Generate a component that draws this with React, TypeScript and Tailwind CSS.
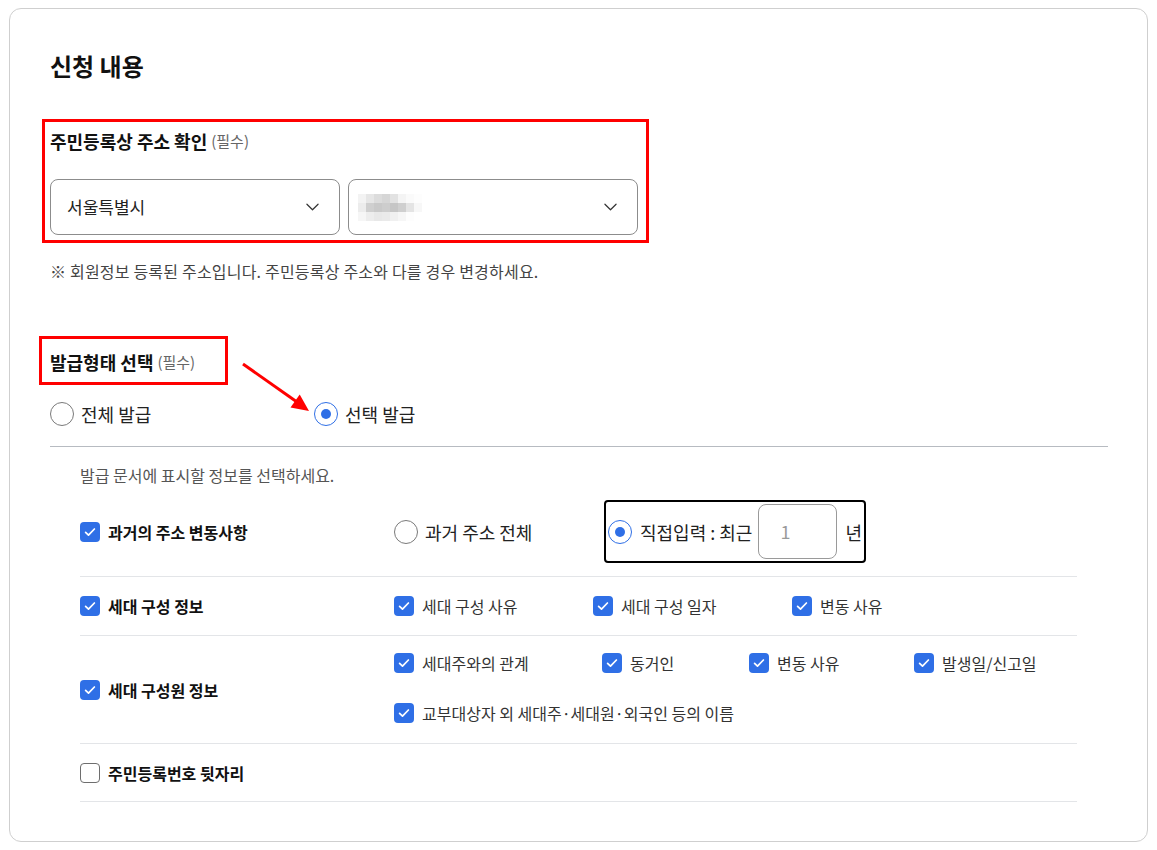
import React from 'react';

const BLUE = 'bg-[#2f6fe6]';

const CheckBox = ({ on = true }: { on?: boolean }) =>
  on ? (
    <span className={`w-5 h-5 rounded-[4px] ${BLUE} flex items-center justify-center shrink-0`}>
      <svg viewBox="0 0 20 20" className="w-5 h-5">
        <path d="M5.6 10.3l2.9 2.9 5.9-6.2" fill="none" stroke="white" strokeWidth="1.7" strokeLinecap="round" strokeLinejoin="round" />
      </svg>
    </span>
  ) : (
    <span className="w-5 h-5 rounded-[4px] border border-[#6e6e6e] bg-white shrink-0" />
  );

const Radio = ({ on = false }: { on?: boolean }) =>
  on ? (
    <span className="w-6 h-6 rounded-full border border-[#2f6fe6] flex items-center justify-center shrink-0 bg-white">
      <span className="w-[10px] h-[10px] rounded-full bg-[#2f6fe6]" />
    </span>
  ) : (
    <span className="w-6 h-6 rounded-full border border-[#7a7a7a] shrink-0 bg-white" />
  );

const Chevron = () => (
  <svg viewBox="0 0 14 8" className="w-[13px] h-2 shrink-0">
    <path d="M1 1l6 6 6-6" fill="none" stroke="#333" strokeWidth="1.3" strokeLinecap="round" strokeLinejoin="round" />
  </svg>
);

const Item = ({ label, w }: { label: string; w?: string }) => (
  <div className={`flex items-center gap-2 ${w ?? ''}`}>
    <CheckBox />
    <span className="text-[16px] leading-5 text-[#333]">{label}</span>
  </div>
);

// blurred placeholder blocks in the second select
const blur = [
  ['#f3f3f3', '#e6e6e6', '#dcdcdc', '#d6d6d6', '#e2e2e2', '#f4f4f4', '#fafafa', '#fdfdfd'],
  ['#ececec', '#cfcfcf', '#c9c9c9', '#cdcdcd', '#c6c6c6', '#cfcfcf', '#e4e4e4', '#f7f7f7'],
  ['#f6f6f6', '#ededed', '#e8e8e8', '#eaeaea', '#f0f0f0', '#f6f6f6', '#fdfdfd', '#ffffff'],
];

export default function App() {
  return (
    <div className="min-h-screen bg-white pt-2 px-[9px] font-['Noto_Sans_CJK_KR',sans-serif] text-[#222]">
      <div className="border border-[#cfcfcf] rounded-[12px] h-[834px] pl-10 pr-[39px] pt-[41px]">
        <h2 className="text-[24px] leading-8 font-bold text-[#111]">신청 내용</h2>

        <div className="mt-[37px] -ml-2 w-[607px] border-[3px] border-[#ff0000] pl-[5px] pr-2 pt-2 pb-[5px]">
          <div className="h-[22px] flex items-center gap-1">
            <span className="text-[18px] leading-[22px] font-bold text-[#111]">주민등록상 주소 확인</span>
            <span className="text-[15px] leading-[22px] text-[#666]">(필수)</span>
          </div>
          <div className="mt-[27px] flex gap-2">
            <div className="w-[290px] h-14 rounded-lg border border-[#8c8c8c] flex items-center justify-between pl-4 pr-5">
              <span className="text-[17px] leading-6 text-[#222]">서울특별시</span>
              <Chevron />
            </div>
            <div className="w-[290px] h-14 rounded-lg border border-[#8c8c8c] flex items-center justify-between pl-[9px] pr-5">
              <div className="flex flex-col">
                {blur.map((row, i) => (
                  <div key={i} className="flex">
                    {row.map((c, j) => (
                      <span key={j} className="w-2 h-[9px]" style={{ backgroundColor: c }} />
                    ))}
                  </div>
                ))}
              </div>
              <Chevron />
            </div>
          </div>
        </div>

        <p className="mt-[18px] text-[16px] leading-5 tracking-[0.2px] text-[#444]">
          ※ 회원정보 등록된 주소입니다. 주민등록상 주소와 다를 경우 변경하세요.
        </p>

        <div className="relative mt-[55px]">
          <div className="-ml-[11px] w-[189px] border-[3px] border-[#ff0000] pl-2 pt-3 pb-[9px]">
            <div className="h-[22px] flex items-center gap-1">
              <span className="text-[18px] leading-[22px] font-bold text-[#111]">발급형태 선택</span>
              <span className="text-[15px] leading-[22px] text-[#666]">(필수)</span>
            </div>
          </div>

          <svg className="absolute left-[185px] top-[19px] w-20 h-[60px] overflow-visible" viewBox="0 0 80 60">
            <line x1="8" y1="9" x2="62" y2="47" stroke="#ff0000" strokeWidth="3" />
            <polygon points="74,56 55.5,52.6 64.7,39.6" fill="#ff0000" />
          </svg>

          <div className="mt-[17px] flex items-center h-6">
            <label className="w-[264px] flex items-center gap-[7px]">
              <Radio />
              <span className="text-[18px] leading-6">전체 발급</span>
            </label>
            <label className="flex items-center gap-[7px]">
              <Radio on />
              <span className="text-[18px] leading-6">선택 발급</span>
            </label>
          </div>
        </div>

        <div className="mt-5 h-px bg-[#b7bbc1]" />

        <div className="pl-[30px] pr-[31px]">
          <p className="mt-[18px] text-[16px] leading-5 text-[#555]">발급 문서에 표시할 정보를 선택하세요.</p>

          <div className="mt-[15px] pb-[13px] flex items-center border-b border-[#e3e5e8]">
            <div className="w-[314px] flex items-center gap-2">
              <CheckBox />
              <span className="text-[16px] leading-5 font-bold text-[#111]">과거의 주소 변동사항</span>
            </div>
            <div className="w-[210px] flex items-center gap-[7px]">
              <Radio />
              <span className="text-[18px] leading-6">과거 주소 전체</span>
            </div>
            <div className="w-[262px] h-[63px] border-2 border-black rounded-[4px] flex items-center pl-[2px]">
              <Radio on />
              <span className="ml-2 text-[18px] leading-6 whitespace-nowrap">직접입력 : 최근</span>
              <div className="ml-[6px] w-[79px] h-[55px] shrink-0 rounded-lg border border-[#9a9a9a] flex items-center pl-[21px] text-[18px] text-[#9a9a9a]">
                1
              </div>
              <span className="ml-2 text-[18px] leading-6">년</span>
            </div>
          </div>

          <div className="h-[59px] flex items-center border-b border-[#e3e5e8]">
            <div className="w-[314px] flex items-center gap-2">
              <CheckBox />
              <span className="text-[16px] leading-5 font-bold text-[#111]">세대 구성 정보</span>
            </div>
            <Item label="세대 구성 사유" w="w-[199px]" />
            <Item label="세대 구성 일자" w="w-[199px]" />
            <Item label="변동 사유" />
          </div>

          <div className="flex items-center border-b border-[#e3e5e8]">
            <div className="w-[314px] flex items-center gap-2">
              <CheckBox />
              <span className="text-[16px] leading-5 font-bold text-[#111]">세대 구성원 정보</span>
            </div>
            <div className="pt-[17px] pb-5 flex flex-col gap-[30px]">
              <div className="flex items-center">
                <Item label="세대주와의 관계" w="w-[208px]" />
                <Item label="동거인" w="w-[147px]" />
                <Item label="변동 사유" w="w-[165px]" />
                <Item label="발생일/신고일" />
              </div>
              <div className="flex items-center">
                <Item label="교부대상자 외 세대주·세대원·외국인 등의 이름" />
              </div>
            </div>
          </div>

          <div className="h-[58px] flex items-center border-b border-[#e3e5e8]">
            <div className="flex items-center gap-2">
              <CheckBox on={false} />
              <span className="text-[16px] leading-5 font-bold text-[#111]">주민등록번호 뒷자리</span>
            </div>
          </div>
        </div>
      </div>
    </div>
  );
}
